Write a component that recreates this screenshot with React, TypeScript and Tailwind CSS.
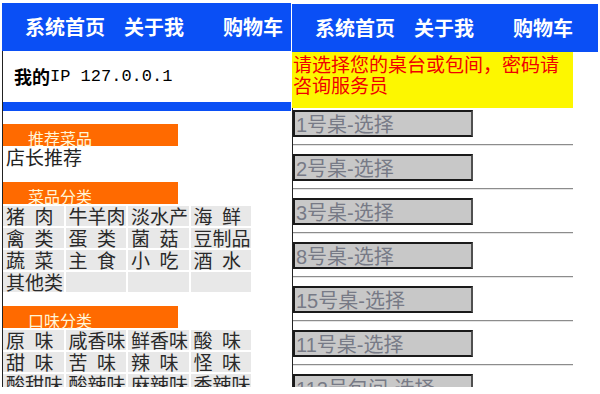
const CJK = "font-['Noto_Sans_CJK_SC',sans-serif]";

const dishCats = [
  "猪 肉", "牛羊肉", "淡水产", "海 鲜",
  "禽 类", "蛋 类", "菌 菇", "豆制品",
  "蔬 菜", "主 食", "小 吃", "酒 水",
  "其他类", "", "", "",
];

const flavors = [
  "原 味", "咸香味", "鲜香味", "酸 味",
  "甜 味", "苦 味", "辣 味", "怪 味",
  "酸甜味", "酸辣味", "麻辣味", "香辣味",
];

const tables = ["1号桌-选择", "2号桌-选择", "3号桌-选择", "8号桌-选择", "15号桌-选择", "11号桌-选择", "112号包间-选择"];

function Header() {
  return (
    <div className="flex h-[48px] shrink-0 items-center bg-[#0a4ff5] pl-[23px] text-[20px] font-bold text-white">
      <span>系统首页</span>
      <span className="ml-[19px]">关于我</span>
      <span className="ml-[39px]">购物车</span>
    </div>
  );
}

function SectionBar({ title }: { title: string }) {
  return (
    <div className="flex h-[22px] w-[175px] items-end bg-[#ff6a00] pl-[25px] text-[16px] leading-none text-[#fff6d8]">
      {title}
    </div>
  );
}

function CellText({ text }: { text: string }) {
  // a blank inside a cell is half an em wide, as in the original
  const parts = text.split(" ");
  return (
    <>
      {parts.map((p, i) => (
        <span key={i}>
          {i > 0 && <span className="inline-block w-[0.5em]" />}
          {p}
        </span>
      ))}
    </>
  );
}

function Grid({ items }: { items: string[] }) {
  return (
    <div className="grid w-[248px] grid-cols-4 gap-[2px]">
      {items.map((t, i) => (
        <div key={i} className="h-[20px] whitespace-nowrap bg-[#e8e8e8] pl-[3px] text-[19px] leading-[20px] text-[#2a2a2a]">
          <CellText text={t} />
        </div>
      ))}
    </div>
  );
}

function LeftPanel() {
  return (
    <div className="ml-[2px] mt-[3px] flex w-[289px] shrink-0 flex-col">
      <Header />
      <div className="flex-1 border-l border-[#222]">
        <div className="flex h-[51px] items-center pl-[11px] text-black">
          <span className="text-[18px] font-bold">我的</span>
          <span className="font-['Liberation_Mono',monospace] text-[17px]">IP 127.0.0.1</span>
        </div>
        <div className="h-[9px] bg-[#0a4ff5]" />

        <div className="mt-[13px]">
          <SectionBar title="推荐菜品" />
        </div>
        <div className="h-[22px] pl-[3px] text-[19px] leading-[22px] text-[#222]">店长推荐</div>

        <div className="mt-[14px]">
          <SectionBar title="菜品分类" />
        </div>
        <div className="mt-[2px]">
          <Grid items={dishCats} />
        </div>

        <div className="mt-[14px]">
          <SectionBar title="口味分类" />
        </div>
        <div className="mt-[2px]">
          <Grid items={flavors} />
        </div>
      </div>
    </div>
  );
}

function RightPanel() {
  return (
    <div className="ml-[1px] mt-[4px] flex w-[306px] shrink-0 flex-col">
      <Header />
      <div className="h-[56px] w-[281px] shrink-0 bg-[#fdf700] pl-[1px] pt-[1px] text-[19px] leading-[21px] text-[#f00000]">
        请选择您的桌台或包间，密码请咨询服务员
      </div>
      <div className="w-[281px] flex-1 shrink-0 border-l border-[#222] pt-[2px]">
        {tables.map((t) => (
          <div key={t}>
            <div className="flex h-[27px] w-[180px] items-center border-2 border-[#1a1a1a] border-r-[#505050] bg-[#c8c8c8] pl-[1px] pt-[2px] font-['Liberation_Sans','Noto_Sans_CJK_SC',sans-serif] text-[20px] leading-none whitespace-nowrap text-[#777a86]">
              {t}
            </div>
            <div className="mb-[8px] mt-[7px] h-[2px] border-t border-b border-t-[#8c8c8c] border-b-[#e4e4e4]" />
          </div>
        ))}
      </div>
    </div>
  );
}

export default function App() {
  return (
    <div className={`h-[394px] w-[600px] overflow-hidden bg-white ${CJK}`}>
      <div className="flex h-[387px] overflow-hidden">
        <LeftPanel />
        <RightPanel />
      </div>
    </div>
  );
}
